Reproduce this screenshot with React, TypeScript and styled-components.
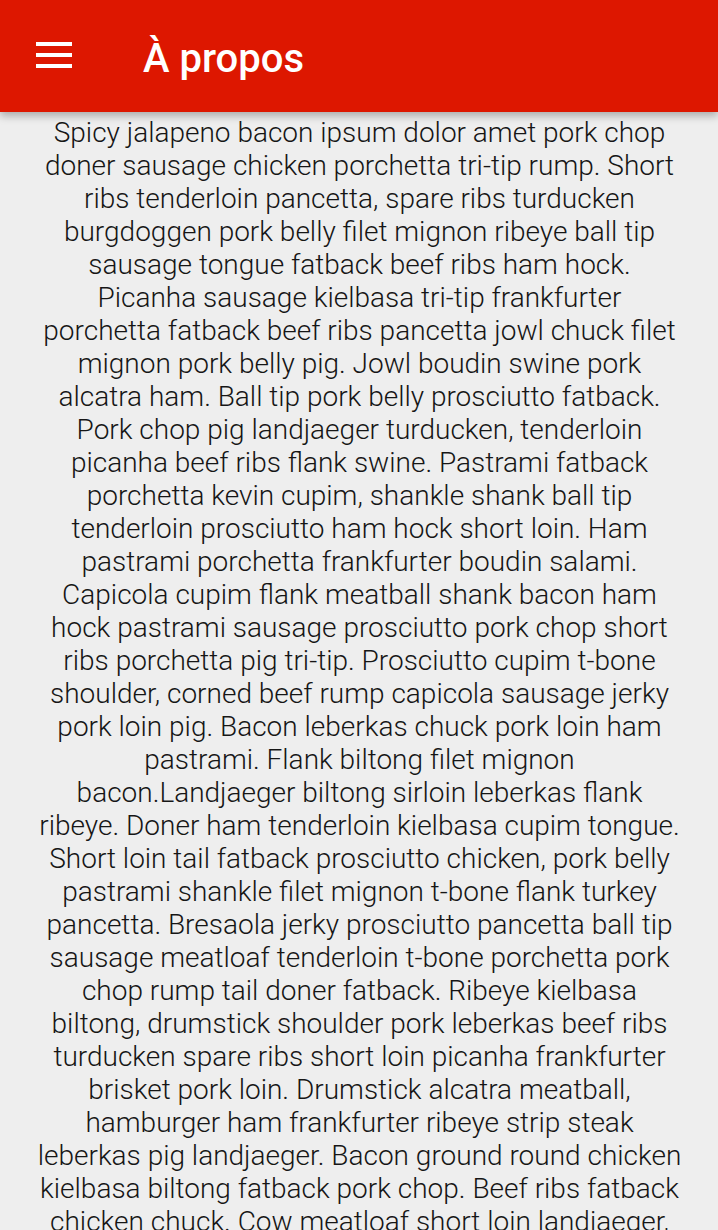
import React from "react";
import styled, { createGlobalStyle } from "styled-components";

const Global = createGlobalStyle`
  html, body { margin: 0; padding: 0; background: #eeeeee; }
  body { font-family: Roboto, "Noto Sans", sans-serif; overflow: hidden; }
`;

const Page = styled.div`
  width: 718px;
  height: 1230px;
  background: #eeeeee;
  display: flex;
  flex-direction: column;
  overflow: hidden;
`;

const Toolbar = styled.header`
  position: relative;
  z-index: 2;
  height: 112px;
  flex: 0 0 112px;
  background: #dd1700;
  display: flex;
  align-items: center;
  box-shadow: 0 4px 8px rgba(0, 0, 0, 0.28);
`;

const NavButton = styled.button`
  width: 112px;
  height: 112px;
  border: 0;
  padding: 0;
  background: transparent;
  display: flex;
  align-items: center;
  justify-content: center;
  margin-left: -2px;
`;

const Title = styled.h1`
  margin: 4px 0 0 33px;
  font-family: Roboto, sans-serif;
  font-weight: 500;
  font-size: 40px;
  color: #ffffff;
  letter-spacing: 0;
`;

const Body = styled.main`
  padding: 4px 35px 0 36px;
  font-family: Roboto, sans-serif;
  font-weight: 300;
  font-size: 28px;
  line-height: 33px;
  color: #161616;
  text-align: center;
`;

const Paragraph = styled.p`
  margin: 0;
`;

const Word = styled.span`
  white-space: nowrap;
`;

const MenuIcon = () => (
  <svg width="48" height="48" viewBox="0 0 48 48">
    <rect x="6" y="10" width="36" height="4" fill="#fff" />
    <rect x="6" y="21" width="36" height="4" fill="#fff" />
    <rect x="6" y="32" width="36" height="4" fill="#fff" />
  </svg>
);

const text =
  "Spicy jalapeno bacon ipsum dolor amet pork chop doner sausage chicken porchetta tri-tip rump. Short ribs tenderloin pancetta, spare ribs turducken burgdoggen pork belly filet mignon ribeye ball tip sausage tongue fatback beef ribs ham hock. Picanha sausage kielbasa tri-tip frankfurter porchetta fatback beef ribs pancetta jowl chuck filet mignon pork belly pig. Jowl boudin swine pork alcatra ham. Ball tip pork belly prosciutto fatback. Pork chop pig landjaeger turducken, tenderloin picanha beef ribs flank swine. Pastrami fatback porchetta kevin cupim, shankle shank ball tip tenderloin prosciutto ham hock short loin. Ham pastrami porchetta frankfurter boudin salami. Capicola cupim flank meatball shank bacon ham hock pastrami sausage prosciutto pork chop short ribs porchetta pig tri-tip. Prosciutto cupim t-bone shoulder, corned beef rump capicola sausage jerky pork loin pig. Bacon leberkas chuck pork loin ham pastrami. Flank biltong filet mignon bacon.Landjaeger biltong sirloin leberkas flank ribeye. Doner ham tenderloin kielbasa cupim tongue. Short loin tail fatback prosciutto chicken, pork belly pastrami shankle filet mignon t-bone flank turkey pancetta. Bresaola jerky prosciutto pancetta ball tip sausage meatloaf tenderloin t-bone porchetta pork chop rump tail doner fatback. Ribeye kielbasa biltong, drumstick shoulder pork leberkas beef ribs turducken spare ribs short loin picanha frankfurter brisket pork loin. Drumstick alcatra meatball, hamburger ham frankfurter ribeye strip steak leberkas pig landjaeger. Bacon ground round chicken kielbasa biltong fatback pork chop. Beef ribs fatback chicken chuck. Cow meatloaf short loin landjaeger, pork belly tri-tip sirloin salami. Turkey swine jerky brisket, tongue pig corned beef.";

const renderText = (s: string) =>
  s.split(" ").map((w, i) => (
    <React.Fragment key={i}>
      {i > 0 ? " " : ""}
      {w.includes("-") ? <Word>{w}</Word> : w}
    </React.Fragment>
  ));

export default function App() {
  return (
    <Page>
      <Global />
      <Toolbar>
        <NavButton aria-label="Menu">
          <MenuIcon />
        </NavButton>
        <Title>À propos</Title>
      </Toolbar>
      <Body>
        <Paragraph>{renderText(text)}</Paragraph>
      </Body>
    </Page>
  );
}
